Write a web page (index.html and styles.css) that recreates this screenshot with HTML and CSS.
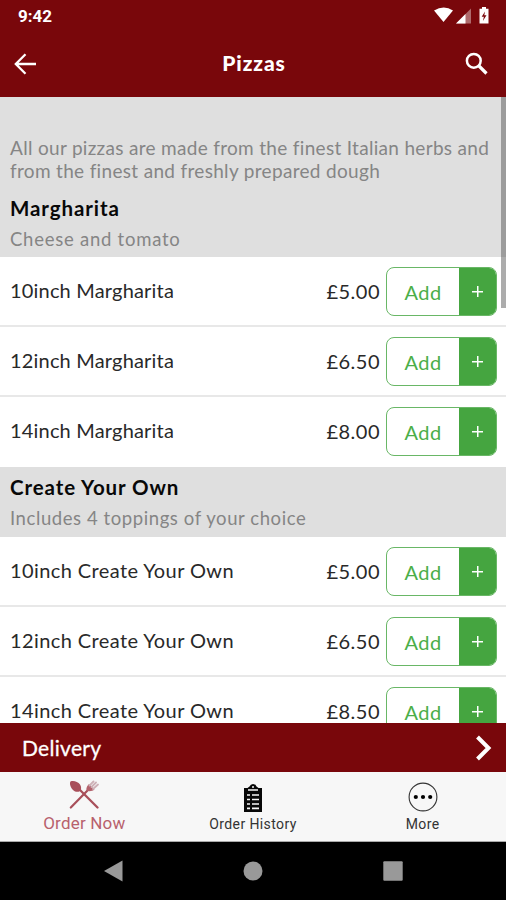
FILE: index.html
```html
<!DOCTYPE html>
<html lang="en">
<head>
<meta charset="utf-8">
<meta name="viewport" content="width=device-width, initial-scale=1">
<title>Pizzas</title>
<link rel="stylesheet" href="styles.css">
</head>
<body>
<div class="app">
  <header class="top">
    <div class="status">
      <span class="time">9:42</span>
      <svg class="signals" width="60" height="20" viewBox="0 0 60 20" fill="#fff">
        <path d="M0 3.500Q10-2.500 19 3.500L9.500 15Z"/>
        <path d="M37 1.500V16.500H22Z" opacity=".4"/>
        <path d="M31.500 7V16.500H22Z"/>
        <path fill-rule="evenodd" d="M45.500 1.800h2.500V0h4v1.800h2.500V16.500H45.500ZM51 4.500l-3.300 5.300h2.200L48.900 14l3.600-5.800h-2.200Z"/>
      </svg>
    </div>
    <div class="bar">
      <svg width="22" height="22" viewBox="0 0 22 22" fill="none" stroke="#fff" stroke-width="2.300"><path d="M11.500 1.200 1.800 11l9.700 9.800M2 11h20"/></svg>
      <h1 class="title">Pizzas</h1>
      <svg width="23" height="23" viewBox="0 0 23 23" fill="none" stroke="#fff"><circle cx="8.800" cy="8.800" r="6.900" stroke-width="2.500"/><path d="m14 14 7.500 7.500" stroke-width="3.200"/></svg>
    </div>
  </header>
  <main class="menu">
    <div class="scrollbar"></div>
    <p class="intro"><span class="intro-a">All our pizzas are made from the finest Italian herbs and</span><br><span class="intro-b">from the finest and freshly prepared dough</span></p>
    <section>
      <div class="group"><h2 class="name n1">Margharita</h2><p class="desc d1">Cheese and tomato</p></div>
      <div class="item"><span class="label m">10inch Margharita</span><span class="price">£5.00</span><div class="button"><span class="add">Add</span><span class="plus"></span></div></div>
      <div class="item"><span class="label m">12inch Margharita</span><span class="price">£6.50</span><div class="button"><span class="add">Add</span><span class="plus"></span></div></div>
      <div class="item"><span class="label m">14inch Margharita</span><span class="price">£8.00</span><div class="button"><span class="add">Add</span><span class="plus"></span></div></div>
    </section>
    <section>
      <div class="group second"><h2 class="name n2">Create Your Own</h2><p class="desc d2">Includes 4 toppings of your choice</p></div>
      <div class="item"><span class="label c">10inch Create Your Own</span><span class="price">£5.00</span><div class="button"><span class="add">Add</span><span class="plus"></span></div></div>
      <div class="item"><span class="label c">12inch Create Your Own</span><span class="price">£6.50</span><div class="button"><span class="add">Add</span><span class="plus"></span></div></div>
      <div class="item"><span class="label c">14inch Create Your Own</span><span class="price">£8.50</span><div class="button"><span class="add">Add</span><span class="plus"></span></div></div>
    </section>
  </main>
  <div class="delivery">
    <span>Delivery</span>
    <svg width="17" height="26" viewBox="0 0 17 26" fill="none" stroke="#fff" stroke-width="4"><path d="m2.500 2 11 11-11 11"/></svg>
  </div>
  <nav class="tabs">
    <div class="tab active">
      <svg width="30" height="30" viewBox="0 0 30 30">
        <path d="m10 9 18.500 18.500" stroke="#a84f5a" stroke-width="2.300" stroke-linecap="round"/>
        <path d="M1.500 1.500C4 .2 9 1.500 11 4.500c1.500 2.400 1.500 5 0 6.500-2 1.500-5 1-7-1C1.500 7.500.2 3.500 1.500 1.500Z" fill="#a84f5a"/>
        <path d="M19 10 1.800 27.500" stroke="#a84f5a" stroke-width="2.200" stroke-linecap="round"/>
        <path d="M17.500 10.500c-.5-2.500.5-4.500 2.500-6.500l5.500 5.500c-2 1.500-5 2.500-8 1Z" fill="#b3626c"/>
        <path d="m20.500 5.500 4-4M22.500 7l4.500-4.500M24 9l5-4.500" stroke="#cdb0b6" stroke-width="1.800" stroke-linecap="round"/>
      </svg>
      <span>Order Now</span>
    </div>
    <div class="tab history">
      <svg width="18" height="28" viewBox="0 0 18 28">
        <path d="M0 4h3.500l2-1.500Q6.500 0 9 0t3.500 2.500l2 1.500H18v24H0Z" fill="#080808"/>
        <path d="M4 6h10M3 11h3M8 11h7M3 15.500h3M8 15.500h7M3 20h3M8 20h7M3 24.300h3M8 24.300h7" stroke="#f7f7f7" stroke-width="1.700"/>
        <circle cx="9" cy="3" r="1" fill="#f7f7f7"/>
      </svg>
      <span>Order History</span>
    </div>
    <div class="tab more">
      <svg width="30" height="30" viewBox="0 0 30 30"><circle cx="15" cy="15" r="13.900" fill="none" stroke="#333" stroke-width="1.100"/><g fill="#000"><circle cx="7.800" cy="15" r="2.100"/><circle cx="15" cy="15" r="2.100"/><circle cx="22.200" cy="15" r="2.100"/></g></svg>
      <span>More</span>
    </div>
  </nav>
  <div class="system">
    <svg width="19" height="22" viewBox="0 0 19 22"><path d="M0 11 18.500.5v21Z" fill="#999"/></svg>
    <svg width="20" height="20" viewBox="0 0 20 20"><circle cx="10" cy="10" r="9.500" fill="#999"/></svg>
    <svg width="20" height="20" viewBox="0 0 20 20"><rect x=".3" y=".3" width="19.400" height="19.400" rx="1" fill="#999"/></svg>
  </div>
</div>
</body>
</html>
```
FILE: styles.css
```css
* { box-sizing: border-box; }
body { margin: 0; font-family: Lato, "Liberation Sans", sans-serif; }
h1, h2, p { margin: 0; }
svg { display: block; flex: none; }
.app { width: 506px; height: 900px; display: flex; flex-direction: column; overflow: hidden; background: #fff; }
.top { height: 97px; flex: none; background: #79070b; color: #fff; }
.status { height: 32px; padding: 7px 12px 0 18px; display: flex; justify-content: space-between; }
.time { font: 700 17px/19px Roboto, sans-serif; }
.bar { height: 63px; padding: 0 18px 0 14px; display: flex; align-items: center; justify-content: space-between; }
.title { font-size: 21px; font-weight: 900; line-height: 26px; letter-spacing: .9px; margin: -2px 0 0 7px; }
.menu { flex: 1; min-height: 0; overflow: hidden; position: relative; background: #fff; }
.scrollbar { position: absolute; top: 0; right: 0; width: 5px; height: 211px; background: rgba(90, 90, 90, .5); }
.intro { height: 90px; padding: 39px 0 0 10px; background: #dfdfdf; color: #858585; font-size: 19px; line-height: 23px; white-space: nowrap; }
.intro-a { letter-spacing: .31px; }
.intro-b { letter-spacing: .32px; }
.group { height: 70px; padding: 8px 10px 0; background: #dfdfdf; }
.second { padding-top: 7px; }
.name { font-size: 20.500px; line-height: 26px; font-weight: 700; color: #080808; letter-spacing: .9px; }
.desc { font-size: 18.500px; line-height: 24px; margin-top: 6px; color: #858585; letter-spacing: .75px; }
.d2 { letter-spacing: .58px; }
.item { height: 70px; padding: 0 9px 0 10px; display: flex; align-items: center; border-bottom: 2px solid #e8e8e8; color: #292929; font-size: 20px; line-height: 24px; }
.item:last-child { border-bottom-color: transparent; }
.label { flex: 1; letter-spacing: .18px; margin-top: -2px; }
.c { letter-spacing: .4px; margin-top: -3px; }
.price { letter-spacing: .5px; margin-right: 6px; }
.button { width: 111px; height: 49px; margin-top: 1px; border: 1px solid #69b766; border-radius: 8px; display: flex; overflow: hidden; }
.add { flex: 1; display: flex; align-items: center; justify-content: center; color: #4bae49; letter-spacing: .5px; }
.plus { width: 37px; background: linear-gradient(#fff, #fff) center / 11px 1.500px no-repeat, linear-gradient(#fff, #fff) center / 1.500px 11px no-repeat, #45a540; }
.delivery { height: 49px; flex: none; padding: 0 14px 0 22px; display: flex; align-items: center; justify-content: space-between; background: #79070b; color: #fff; font-size: 21px; letter-spacing: .3px; -webkit-text-stroke: .3px #fff; }
.tabs { height: 70px; flex: none; display: grid; grid-template-columns: 1fr 1fr 1fr; background: #f7f7f7; border-bottom: 1px solid #aaa; }
.tab { display: flex; flex-direction: column; align-items: center; padding-top: 10px; color: #333; font: 400 14px/18px Roboto, sans-serif; white-space: nowrap; letter-spacing: .4px; }
.tab span { margin-top: 3px; }
.active { padding-top: 8px; color: #b8616d; letter-spacing: .2px; }
.active span { font-size: 17px; line-height: 20px; margin-top: 3px; }
.more { padding-left: 2px; }
.history { padding-top: 12px; }
.system { height: 58px; flex: none; background: #000; display: flex; align-items: center; justify-content: center; gap: 120px; }
```
